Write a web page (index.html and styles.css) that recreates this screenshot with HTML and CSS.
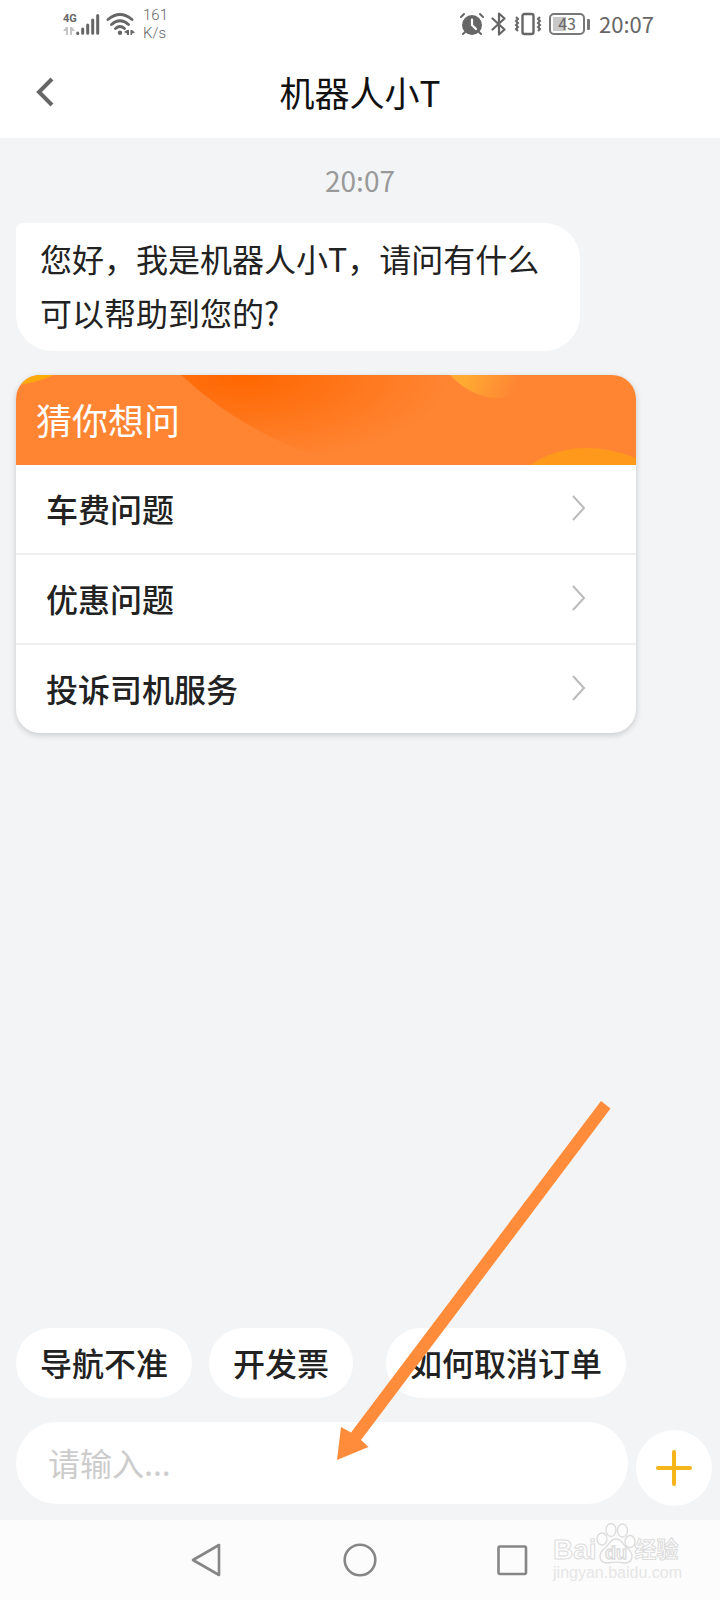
FILE: index.html
```html
<!DOCTYPE html>
<html lang="zh-CN">
<head>
  <meta charset="UTF-8">
  <meta name="viewport" content="width=device-width, initial-scale=1">
  <title>机器人小T</title>
  <link rel="stylesheet" href="styles.css">
</head>
<body>
  <div class="status-bar">
    <div class="status-left">
      <div class="network">
        <span class="network-type">4G</span>
        <svg width="12" height="10" viewBox="0 0 12 10" fill="#c4c4c4">
          <path d="M3 1h2v8H3V5H0zM7 1h2l3 4H9v4H7z"/>
        </svg>
      </div>
      <svg class="signal" width="24" height="24" viewBox="0 0 24 24" stroke="#666" stroke-width="3" stroke-linecap="round">
        <path d="M1.7 21v.4M6.7 17v4.3M11.7 13v8.3M16.7 8v13.3M21.7 3.500v17.8"/>
      </svg>
      <svg class="wifi" width="30" height="24" viewBox="0 0 30 24" fill="none" stroke="#666" stroke-width="2.8" stroke-linecap="round">
        <path d="M2 7.5Q14 -2.500 26 7.500M5.500 12.500Q14 5 22.500 12.500M9.500 16.500Q14 12.500 18.500 16.500"/>
        <circle cx="14" cy="20.700" r="2.200" fill="#666" stroke="none"/>
        <path d="M21 18h2v5h-2v-1.500l-3-1.500zM24.500 18h1.500l3 2.500-3 1v1.500h-1.500z" fill="#666" stroke="none"/>
      </svg>
      <div class="speed">161<br>K/s</div>
    </div>
    <div class="status-right">
      <svg width="24" height="24" viewBox="0 0 24 24" fill="none" stroke="#666" stroke-width="2" stroke-linecap="round">
        <circle cx="12" cy="13" r="10" fill="#666" stroke="none"/>
        <path d="M1 5l3-3M23 5l-3-3M5 20l-2 2M19 20l2 2"/>
        <path d="M12 7.500v5.500l4 4" stroke="#fff" stroke-width="2.200"/>
      </svg>
      <svg width="16" height="24" viewBox="0 0 16 24" fill="none" stroke="#666" stroke-width="2.200" stroke-linejoin="round" stroke-linecap="round">
        <path d="M1.500 6.500l12 11L8 22.500v-21l5.500 5-12 11"/>
      </svg>
      <svg width="28" height="24" viewBox="0 0 28 24" fill="none" stroke="#666" stroke-width="2">
        <rect x="8.500" y="2" width="11" height="20" rx="2" stroke-width="2.400"/>
        <path d="M2 5l2 2-2 2 2 2-2 2 2 2-2 2 2 2M26 5l-2 2 2 2-2 2 2 2-2 2 2 2-2 2"/>
      </svg>
      <div class="battery"><span>43</span></div>
      <time class="clock">20:07</time>
    </div>
  </div>

  <header class="header">
    <button class="back" aria-label="返回">
      <svg width="18" height="30" viewBox="0 0 18 30" fill="none" stroke="#666" stroke-width="4">
        <path d="M16 2L3 15l13 13"/>
      </svg>
    </button>
    <h1>机器人小T</h1>
  </header>

  <main class="chat">
    <time class="chat-time">20:07</time>
    <p class="bubble">您好，我是机器人小T，请问有什么可以帮助到您的?</p>

    <section class="card">
      <div class="card-header">
        <svg class="card-bg" viewBox="0 0 620 90" preserveAspectRatio="none">
          <defs>
            <radialGradient id="wave" gradientUnits="userSpaceOnUse" cx="0" cy="0" r="1" gradientTransform="translate(225 0) scale(210 88)">
              <stop offset="0" stop-color="#ff6600"/>
              <stop offset="1" stop-color="#ff8533"/>
            </radialGradient>
            <linearGradient id="drop" gradientUnits="userSpaceOnUse" x1="450" y1="0" x2="496" y2="20">
              <stop offset="0" stop-color="#ffab33"/>
              <stop offset="1" stop-color="#ff8533"/>
            </linearGradient>
          </defs>
          <rect width="620" height="90" fill="#ff8533"/>
          <path d="M165 0Q235 65 330 90H450V0z" fill="url(#wave)"/>
          <path d="M434 0Q455 22 480 23T512 0z" fill="url(#drop)"/>
          <path d="M514 90Q560 60 620 83V90z" fill="#ff991c"/>
          <path d="M0 10Q20 8 38 0H0z" fill="#fbaa0c"/>
        </svg>
        <h2>猜你想问</h2>
      </div>
      <ul class="questions">
        <li>
          <a href="#">车费问题
            <svg width="14" height="26" viewBox="0 0 14 26" fill="none" stroke="#bbb" stroke-width="2"><path d="M1 1l11 12L1 25"/></svg>
          </a>
        </li>
        <li>
          <a href="#">优惠问题
            <svg width="14" height="26" viewBox="0 0 14 26" fill="none" stroke="#bbb" stroke-width="2"><path d="M1 1l11 12L1 25"/></svg>
          </a>
        </li>
        <li>
          <a href="#">投诉司机服务
            <svg width="14" height="26" viewBox="0 0 14 26" fill="none" stroke="#bbb" stroke-width="2"><path d="M1 1l11 12L1 25"/></svg>
          </a>
        </li>
      </ul>
    </section>
  </main>

  <footer class="composer">
    <div class="chips">
      <button class="chip">导航不准</button>
      <button class="chip">开发票</button>
      <button class="chip chip-spaced">如何取消订单</button>
    </div>
    <form class="input-row">
      <input type="text" placeholder="请输入..." aria-label="请输入">
      <button type="button" class="plus" aria-label="更多">
        <svg width="36" height="36" viewBox="0 0 36 36" stroke="#f5b51b" stroke-width="4" stroke-linecap="round">
          <path d="M18 2v32M2 18h32"/>
        </svg>
      </button>
    </form>
    <svg class="arrow" width="274" height="360" viewBox="0 0 274 360" fill="#ff8c3a">
      <path d="M264 0L273.500 7.500 24 339 31.500 346 0 359 4 326 14 331.500z"/>
    </svg>
  </footer>

  <nav class="nav-bar">
    <button aria-label="返回">
      <svg width="36" height="36" viewBox="0 0 36 36" fill="none" stroke="#868686" stroke-width="2.600" stroke-linejoin="round">
        <path d="M30 3v30L4 18z"/>
      </svg>
    </button>
    <button aria-label="主页">
      <svg width="36" height="36" viewBox="0 0 36 36" fill="none" stroke="#868686" stroke-width="2.600">
        <circle cx="18" cy="18" r="15.300"/>
      </svg>
    </button>
    <button aria-label="最近任务">
      <svg width="36" height="36" viewBox="0 0 36 36" fill="none" stroke="#868686" stroke-width="2.600">
        <rect x="3.500" y="4.500" width="27.500" height="27.500" rx="1.500"/>
      </svg>
    </button>
    <div class="watermark">
      <div class="watermark-logo">
        <span>Bai</span>
        <svg width="38" height="42" viewBox="0 0 38 42" fill="#fdfdfd" stroke="#dcdcdc" stroke-width="1.300">
          <ellipse cx="5" cy="17" rx="5" ry="6"/>
          <ellipse cx="14" cy="8" rx="5" ry="6.500"/>
          <ellipse cx="25.500" cy="8.500" rx="5" ry="6.500"/>
          <ellipse cx="33" cy="19.500" rx="5" ry="6"/>
          <path d="M19 17c-6 0-7 6-11 9-8 6-6 15 3 15 4-1 12-1 16 0 9 0 11-9 3-15-5-4-5-9-11-9z"/>
          <text x="19" y="37" text-anchor="middle" class="watermark-du">du</text>
        </svg>
        <span class="watermark-cn">经验</span>
      </div>
      <div class="watermark-url">jingyan.baidu.com</div>
    </div>
  </nav>
</body>
</html>
```
FILE: styles.css
```css
* { box-sizing: border-box; }
body {
  margin: 0;
  min-height: 100vh;
  display: flex;
  flex-direction: column;
  background-color: #f2f4f6;
  color: #222;
  font-family: "Noto Sans CJK SC", sans-serif;
  font-size: 32px;
}
h1, h2, p, ul { margin: 0; padding: 0; font-weight: normal; }
svg { display: block; flex: none; }
button {
  border: 0;
  padding: 0;
  background: none;
  color: inherit;
  font: inherit;
  cursor: pointer;
}

/* status bar */
.status-bar {
  height: 48px;
  padding: 0 66px 0 63px;
  display: flex;
  justify-content: space-between;
  align-items: center;
  background-color: #fff;
  color: #666;
}
.status-left, .status-right { display: flex; align-items: center; }
.status-right { gap: 7px; }
.network { width: 13px; }
.network-type {
  display: block;
  font: bold 11px/14px Roboto, sans-serif;
}
.wifi { margin-left: 6px; }
.speed {
  margin-left: 7px;
  font: 300 15px/18px Roboto, sans-serif;
}
.battery {
  position: relative;
  width: 36px;
  height: 22px;
  margin-right: 7px;
  border: 2px solid #777;
  border-radius: 5px;
  background: linear-gradient(#c8c8c8, #c8c8c8) 2px 2px / 13px 14px no-repeat;
  font-size: 16px;
  line-height: 16px;
  text-align: center;
}
.battery::after {
  content: "";
  position: absolute;
  top: 4px;
  right: -7px;
  width: 3px;
  height: 11px;
  border-radius: 1px;
  background-color: #777;
}
.clock {
  padding-bottom: 2px;
  font-size: 22px;
  line-height: 24px;
}

/* title bar */
.header {
  height: 90px;
  padding: 0 36px 2px;
  display: grid;
  grid-template-columns: 30px 1fr 30px;
  align-items: center;
  background-color: #fff;
}
.header h1 {
  color: #111;
  font-size: 35px;
  line-height: 48px;
  text-align: center;
}

/* messages */
.chat {
  flex: 1;
  padding: 22px 16px;
}
.chat-time {
  display: block;
  margin-bottom: 23px;
  color: #999;
  font-size: 28px;
  line-height: 40px;
  text-align: center;
}
.bubble {
  max-width: 564px;
  margin-bottom: 24px;
  padding: 8px 24px 12px;
  border-radius: 8px 36px 36px 36px;
  background-color: #fff;
  line-height: 54px;
}
.card {
  max-width: 620px;
  border-radius: 24px;
  overflow: hidden;
  background-color: #fff;
  box-shadow: 0 2px 6px rgba(0, 0, 0, 0.18);
}
.card-header {
  position: relative;
  height: 90px;
  padding: 0 20px 2px;
  display: flex;
  align-items: center;
}
.card-bg {
  position: absolute;
  top: 0;
  left: 0;
  width: 100%;
  height: 100%;
}
.card-header h2 {
  position: relative;
  color: #fff;
  font-size: 36px;
  line-height: 48px;
}
.questions { list-style: none; }
.questions li + li { border-top: 2px solid #f0f0f1; }
.questions a {
  height: 88px;
  padding: 0 50px 2px 30px;
  display: flex;
  justify-content: space-between;
  align-items: center;
  color: inherit;
  font-weight: 500;
  text-decoration: none;
}

/* quick replies and input */
.composer {
  position: relative;
  padding: 0 8px 14px 16px;
}
.chips { display: flex; gap: 17px; }
.chip {
  height: 70px;
  padding: 0 24px 2px;
  border-radius: 35px;
  background-color: #fff;
  font-weight: 500;
  white-space: nowrap;
}
.chip-spaced { margin-left: 16px; }
.input-row {
  margin-top: 24px;
  display: flex;
  align-items: flex-start;
  gap: 8px;
}
.input-row input {
  flex: 1;
  min-width: 0;
  height: 82px;
  padding: 0 32px 2px;
  border: 0;
  border-radius: 41px;
  outline: none;
  background-color: #fff;
  color: inherit;
  font: inherit;
}
.input-row input::placeholder { color: #ccc; opacity: 1; }
.plus {
  width: 76px;
  height: 76px;
  margin-top: 8px;
  display: flex;
  justify-content: center;
  align-items: center;
  border-radius: 50%;
  background-color: #fff;
}
.arrow {
  position: absolute;
  left: 337px;
  bottom: 59px;
  pointer-events: none;
}

/* system navigation */
.nav-bar {
  position: relative;
  height: 80px;
  display: flex;
  justify-content: center;
  align-items: center;
  gap: 117px;
  background-color: #fcfcfc;
}
.watermark {
  position: absolute;
  right: 38px;
  top: 2px;
  color: #fdfdfd;
  font-family: "Liberation Sans", "Noto Sans CJK SC", sans-serif;
  -webkit-text-stroke: 1px #dcdcdc;
}
.watermark-logo {
  display: flex;
  align-items: flex-end;
  font-size: 28px;
  font-weight: bold;
  line-height: 28px;
}
.watermark-logo svg { overflow: visible; }
.watermark-cn { font-size: 22px; }
.watermark-du {
  font: bold 18px "Liberation Sans", sans-serif;
  -webkit-text-stroke: 0;
}
.watermark-url {
  color: #e6e6e6;
  font-size: 16px;
  line-height: 18px;
  -webkit-text-stroke: 0;
}
```
